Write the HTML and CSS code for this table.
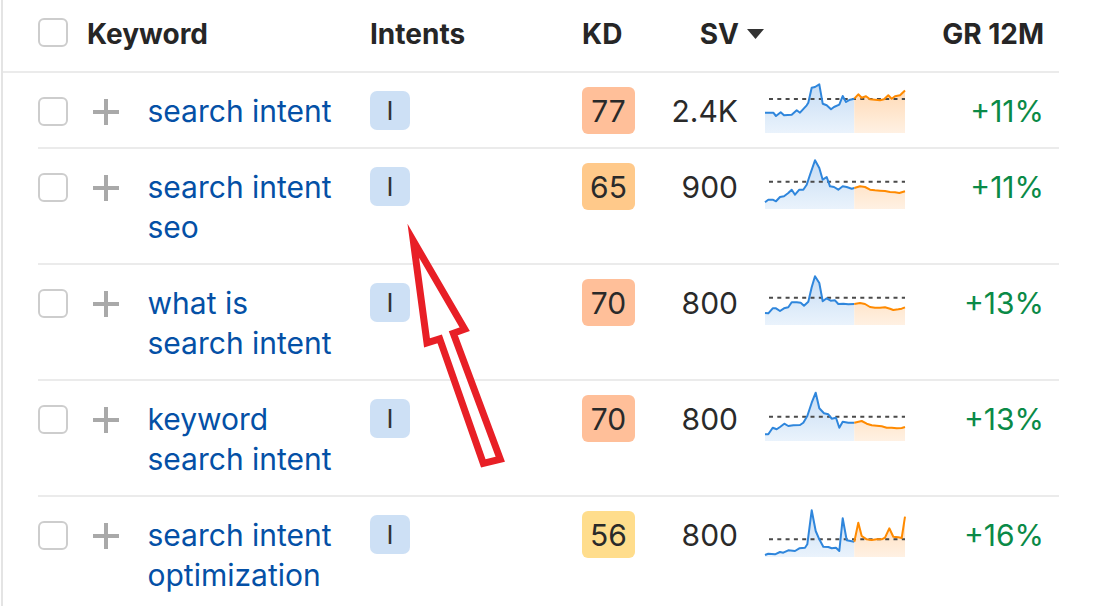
FILE: index.html
```html
<!DOCTYPE html>
<html lang="en">
<head>
<meta charset="utf-8">
<title>Keywords</title>
<link rel="stylesheet" href="styles.css">
</head>
<body>
<svg class="defs" width="0" height="0" aria-hidden="true">
  <defs>
    <linearGradient id="gBlue" x1="0" y1="0" x2="0" y2="50" gradientUnits="userSpaceOnUse">
      <stop offset="0" stop-color="#c6dcf4"/>
      <stop offset="1" stop-color="#eaf3fc"/>
    </linearGradient>
    <linearGradient id="gOrange" x1="0" y1="0" x2="0" y2="50" gradientUnits="userSpaceOnUse">
      <stop offset="0" stop-color="#ffd6ae"/>
      <stop offset="1" stop-color="#fff1e3"/>
    </linearGradient>
  </defs>
</svg>

<div class="table">
  <div class="head">
    <div class="c-check"><span class="checkbox"></span></div>
    <div class="h h-kw">Keyword</div>
    <div class="h">Intents</div>
    <div class="h">KD</div>
    <div class="h sv-head">SV <svg class="sort" width="17" height="10" viewBox="0 0 17 10"><polygon points="0,0 17,0 8.5,10" fill="#333"/></svg></div>
    <div></div>
    <div class="h h-gr">GR 12M</div>
  </div>

  <div class="row">
    <div class="c-check"><span class="checkbox"></span></div>
    <div class="c-plus"><svg class="plus" width="26" height="26" viewBox="0 0 26 26"><path d="M13 0V26M0 13H26" stroke="#a9a9a9" stroke-width="4"/></svg></div>
    <div class="c-kw"><a class="kw">search intent</a></div>
    <div class="c-int"><span class="intent">I</span></div>
    <div class="c-kd"><span class="kd kd-red">77</span></div>
    <div class="c-sv num">2.4K</div>
    <div class="c-chart">
      <svg class="spark" width="140" height="50" viewBox="0 0 140 50">
        <path fill="url(#gBlue)" d="M0,29.7 L8.3,29.7 11,33 15.7,29.3 19,32.3 26.7,31.7 31.7,27.3 35,29.7 41.7,22.3 43.3,19.7 46.7,4.7 50,4 54.3,1.3 57.7,20.7 61.7,22.3 66,26.3 69,24 74.3,21.7 77.7,13 81,19 85,16.7 89.3,15.7 L89.3,50 L0,50Z"/>
        <path fill="url(#gOrange)" d="M89.3,15.7 L93.3,11.3 96.7,14.7 101,13.3 105,16.3 110,16.7 115,17.3 119,16.3 123.3,12.3 126.7,15.7 130,13.3 135,12.3 140,7.5 L140,50 L89.3,50Z"/>
        <line class="avg" x1="4" y1="16" x2="140" y2="16"/>
        <polyline class="lb" points="0,29.7 8.3,29.7 11,33 15.7,29.3 19,32.3 26.7,31.7 31.7,27.3 35,29.7 41.7,22.3 43.3,19.7 46.7,4.7 50,4 54.3,1.3 57.7,20.7 61.7,22.3 66,26.3 69,24 74.3,21.7 77.7,13 81,19 85,16.7 89.3,15.7"/>
        <polyline class="lo" points="89.3,15.7 93.3,11.3 96.7,14.7 101,13.3 105,16.3 110,16.7 115,17.3 119,16.3 123.3,12.3 126.7,15.7 130,13.3 135,12.3 140,7.5"/>
      </svg>
    </div>
    <div class="c-gr num green">+11%</div>
  </div>

  <div class="row">
    <div class="c-check"><span class="checkbox"></span></div>
    <div class="c-plus"><svg class="plus" width="26" height="26" viewBox="0 0 26 26"><path d="M13 0V26M0 13H26" stroke="#a9a9a9" stroke-width="4"/></svg></div>
    <div class="c-kw"><a class="kw">search intent seo</a></div>
    <div class="c-int"><span class="intent">I</span></div>
    <div class="c-kd"><span class="kd kd-orange">65</span></div>
    <div class="c-sv num">900</div>
    <div class="c-chart">
      <svg class="spark" width="140" height="50" viewBox="0 0 140 50">
        <path fill="url(#gBlue)" d="M0,43.3 L3.3,40.7 7.7,40.7 11,42.3 15,38 19,37.3 23.3,34 26.7,30.7 30,35.7 34.3,30.7 38.3,30.7 41.7,25.7 45,15.7 50,1.3 54.3,9 57.7,20.7 61.7,18 65,27.3 69,28 73.3,30.7 77.7,27.3 81.7,28 86.7,29.7 89.3,29 L89.3,50 L0,50Z"/>
        <path fill="url(#gOrange)" d="M89.3,29 L95,27.3 100,28 105,30.7 110,31.3 115,31.7 120,32 125,33 130,33.3 134.3,34 140,32.3 L140,50 L89.3,50Z"/>
        <line class="avg" x1="4" y1="22.7" x2="140" y2="22.7"/>
        <polyline class="lb" points="0,43.3 3.3,40.7 7.7,40.7 11,42.3 15,38 19,37.3 23.3,34 26.7,30.7 30,35.7 34.3,30.7 38.3,30.7 41.7,25.7 45,15.7 50,1.3 54.3,9 57.7,20.7 61.7,18 65,27.3 69,28 73.3,30.7 77.7,27.3 81.7,28 86.7,29.7 89.3,29"/>
        <polyline class="lo" points="89.3,29 95,27.3 100,28 105,30.7 110,31.3 115,31.7 120,32 125,33 130,33.3 134.3,34 140,32.3"/>
      </svg>
    </div>
    <div class="c-gr num green">+11%</div>
  </div>

  <div class="row">
    <div class="c-check"><span class="checkbox"></span></div>
    <div class="c-plus"><svg class="plus" width="26" height="26" viewBox="0 0 26 26"><path d="M13 0V26M0 13H26" stroke="#a9a9a9" stroke-width="4"/></svg></div>
    <div class="c-kw"><a class="kw">what is search intent</a></div>
    <div class="c-int"><span class="intent">I</span></div>
    <div class="c-kd"><span class="kd kd-red">70</span></div>
    <div class="c-sv num">800</div>
    <div class="c-chart">
      <svg class="spark" width="140" height="50" viewBox="0 0 140 50">
        <path fill="url(#gBlue)" d="M0,38 L3.3,38.3 7.7,33.3 11,33.3 15,36 19,33.3 23.3,32.3 26.7,27.3 31.7,27.3 35.7,27.7 39,30.7 43.3,26.7 46.7,12.3 50,1.3 54.3,8 57.7,26.3 61.7,23.3 65.7,25.7 70,25.3 73.3,29 78.3,28.7 83.3,29.3 89.3,29 L89.3,50 L0,50Z"/>
        <path fill="url(#gOrange)" d="M89.3,29 L95,28 100,29 105,32 110,32.7 115,32.7 120,32.3 125,33.7 128.3,35 133.3,34.3 136.7,33.7 140,32.3 L140,50 L89.3,50Z"/>
        <line class="avg" x1="4" y1="22.7" x2="140" y2="22.7"/>
        <polyline class="lb" points="0,38 3.3,38.3 7.7,33.3 11,33.3 15,36 19,33.3 23.3,32.3 26.7,27.3 31.7,27.3 35.7,27.7 39,30.7 43.3,26.7 46.7,12.3 50,1.3 54.3,8 57.7,26.3 61.7,23.3 65.7,25.7 70,25.3 73.3,29 78.3,28.7 83.3,29.3 89.3,29"/>
        <polyline class="lo" points="89.3,29 95,28 100,29 105,32 110,32.7 115,32.7 120,32.3 125,33.7 128.3,35 133.3,34.3 136.7,33.7 140,32.3"/>
      </svg>
    </div>
    <div class="c-gr num green">+13%</div>
  </div>

  <div class="row">
    <div class="c-check"><span class="checkbox"></span></div>
    <div class="c-plus"><svg class="plus" width="26" height="26" viewBox="0 0 26 26"><path d="M13 0V26M0 13H26" stroke="#a9a9a9" stroke-width="4"/></svg></div>
    <div class="c-kw"><a class="kw">keyword search intent</a></div>
    <div class="c-int"><span class="intent">I</span></div>
    <div class="c-kd"><span class="kd kd-red">70</span></div>
    <div class="c-sv num">800</div>
    <div class="c-chart">
      <svg class="spark" width="140" height="50" viewBox="0 0 140 50">
        <path fill="url(#gBlue)" d="M0,43.3 L3.3,43.3 7.7,36.7 11.7,38.3 15,36 19.3,32.7 23.3,35 28.3,34.3 35,34 38.3,31.7 42.3,25 46.7,11.7 50.7,1.7 54.3,17.3 59,22.3 63.3,23.3 66.7,27.7 71,26.7 74.3,36.7 77.7,30.7 83.3,31.7 89.3,31.7 L89.3,50 L0,50Z"/>
        <path fill="url(#gOrange)" d="M89.3,31.7 L96.7,30 101.7,32.7 106.7,34.3 111.7,34.7 116.7,35.3 121.7,36.7 126.7,36.7 131.7,37.3 136.7,37 140,36 L140,50 L89.3,50Z"/>
        <line class="avg" x1="4" y1="25.7" x2="140" y2="25.7"/>
        <polyline class="lb" points="0,43.3 3.3,43.3 7.7,36.7 11.7,38.3 15,36 19.3,32.7 23.3,35 28.3,34.3 35,34 38.3,31.7 42.3,25 46.7,11.7 50.7,1.7 54.3,17.3 59,22.3 63.3,23.3 66.7,27.7 71,26.7 74.3,36.7 77.7,30.7 83.3,31.7 89.3,31.7"/>
        <polyline class="lo" points="89.3,31.7 96.7,30 101.7,32.7 106.7,34.3 111.7,34.7 116.7,35.3 121.7,36.7 126.7,36.7 131.7,37.3 136.7,37 140,36"/>
      </svg>
    </div>
    <div class="c-gr num green">+13%</div>
  </div>

  <div class="row">
    <div class="c-check"><span class="checkbox"></span></div>
    <div class="c-plus"><svg class="plus" width="26" height="26" viewBox="0 0 26 26"><path d="M13 0V26M0 13H26" stroke="#a9a9a9" stroke-width="4"/></svg></div>
    <div class="c-kw"><a class="kw">search intent optimization</a></div>
    <div class="c-int"><span class="intent">I</span></div>
    <div class="c-kd"><span class="kd kd-yellow">56</span></div>
    <div class="c-sv num">800</div>
    <div class="c-chart">
      <svg class="spark" width="140" height="50" viewBox="0 0 140 50">
        <path fill="url(#gBlue)" d="M0,48 L3.3,46.7 10,47.3 15,45 18.3,45.7 23.3,43.3 30,44 34.3,41.3 40,40.7 42.3,37.3 46.7,3.3 50.7,24 54.3,32.3 58.3,39.7 63.3,40 66.7,41.3 71,40.7 74.3,44 77.7,11.3 81.7,33.3 89.3,34.7 L89.3,50 L0,50Z"/>
        <path fill="url(#gOrange)" d="M89.3,34.7 L93.3,15.7 96.7,29 101.7,32.3 106.7,33 111.7,32.3 116.7,32.3 120,30.7 124.3,21.3 128.3,29.7 133.3,30.3 136.7,31 140,9.7 L140,50 L89.3,50Z"/>
        <line class="avg" x1="4" y1="32.3" x2="140" y2="32.3"/>
        <polyline class="lb" points="0,48 3.3,46.7 10,47.3 15,45 18.3,45.7 23.3,43.3 30,44 34.3,41.3 40,40.7 42.3,37.3 46.7,3.3 50.7,24 54.3,32.3 58.3,39.7 63.3,40 66.7,41.3 71,40.7 74.3,44 77.7,11.3 81.7,33.3 89.3,34.7"/>
        <polyline class="lo" points="89.3,34.7 93.3,15.7 96.7,29 101.7,32.3 106.7,33 111.7,32.3 116.7,32.3 120,30.7 124.3,21.3 128.3,29.7 133.3,30.3 136.7,31 140,9.7"/>
      </svg>
    </div>
    <div class="c-gr num green">+16%</div>
  </div>
</div>

<svg class="arrow" width="1106" height="606" viewBox="0 0 1106 606" aria-hidden="true">
  <polygon points="413.3,240.8 464.7,329.2 453.3,333.3 500.3,459.2 483.3,463.3 439.7,338.8 427,342.8" fill="#fff" stroke="#e81f26" stroke-width="7" stroke-linejoin="miter" stroke-miterlimit="12"/>
</svg>
</body>
</html>
```

FILE: styles.css
```css
* { box-sizing: border-box; }

html, body {
  margin: 0;
  padding: 0;
  background: #fff;
  width: 1106px;
  height: 606px;
  overflow: hidden;
}

body {
  font-family: Inter, "Noto Sans", "Liberation Sans", sans-serif;
  color: #2a2a2a;
  position: relative;
}

.defs { position: absolute; width: 0; height: 0; }

.table {
  margin-left: 1px;
  width: 1058px;
  border-left: 2px solid #e4e4e4;
}

.head,
.row {
  display: grid;
  align-items: start;
}

.head {
  height: 73px;
  padding: 0 15px 3px 35px;
  border-bottom: 2px solid #ebebeb;
  align-items: center;
  grid-template-columns: 49px 283px 212px 80px 105px 138px 139px;
}

.h {
  font-size: 28px;
  font-weight: 700;
  color: #262626;
  line-height: 40px;
}

.head .checkbox { margin-top: -3px; }

.sv-head {
  display: flex;
  align-items: center;
  justify-content: flex-end;
  gap: 8px;
  padding-right: 3px;
}

.h-gr { text-align: right; }
.c-gr { text-align: right; }

.row {
  margin-left: 35px;
  padding: 10px 15px 13px 0;
  border-bottom: 2px solid #ebebeb;
  grid-template-columns: 54px 55.5px 222.5px 212px 80px 103px 140px 139px;
}

.checkbox {
  display: block;
  width: 30px;
  height: 29px;
  border: 2px solid #cdcdcd;
  border-radius: 6px;
  background: #fff;
}

.row .checkbox { margin-top: 14px; }

.plus { display: block; margin-top: 16px; margin-left: 1px; }

.c-kw { margin-top: 8px; padding-bottom: 3px; }

.kw {
  display: block;
  max-width: 186px;
  font-size: 30px;
  line-height: 40px;
  color: #0450a6;
}

.intent {
  display: flex;
  align-items: center;
  justify-content: center;
  margin-top: 8px;
  width: 40px;
  height: 39px;
  border-radius: 7px;
  background: #cde0f5;
  color: #333;
  font-size: 26px;
}

.kd {
  display: flex;
  align-items: center;
  justify-content: center;
  margin-top: 4px;
  width: 53px;
  height: 47px;
  border-radius: 6px;
  font-size: 30px;
  color: #2a2a2a;
}

.kd-red { background: #ffbf99; }
.kd-orange { background: #ffc98a; }
.kd-yellow { background: #ffdd8c; }

.num {
  margin-top: 8px;
  font-size: 30px;
  line-height: 40px;
  color: #2a2a2a;
}

.c-sv.num {
  text-align: right;
  padding-right: 27px;
}

.green { color: #0a8a47; }

.spark { display: block; overflow: visible; }

.avg {
  stroke: #4a4a4a;
  stroke-width: 2;
  stroke-dasharray: 4 4.3;
}

.lb, .lo {
  fill: none;
  stroke-width: 2;
  stroke-linejoin: round;
}
.lb { stroke: #2f86dc; }
.lo { stroke: #ff8a00; }

.arrow {
  position: absolute;
  left: 0;
  top: 0;
  pointer-events: none;
}
```
